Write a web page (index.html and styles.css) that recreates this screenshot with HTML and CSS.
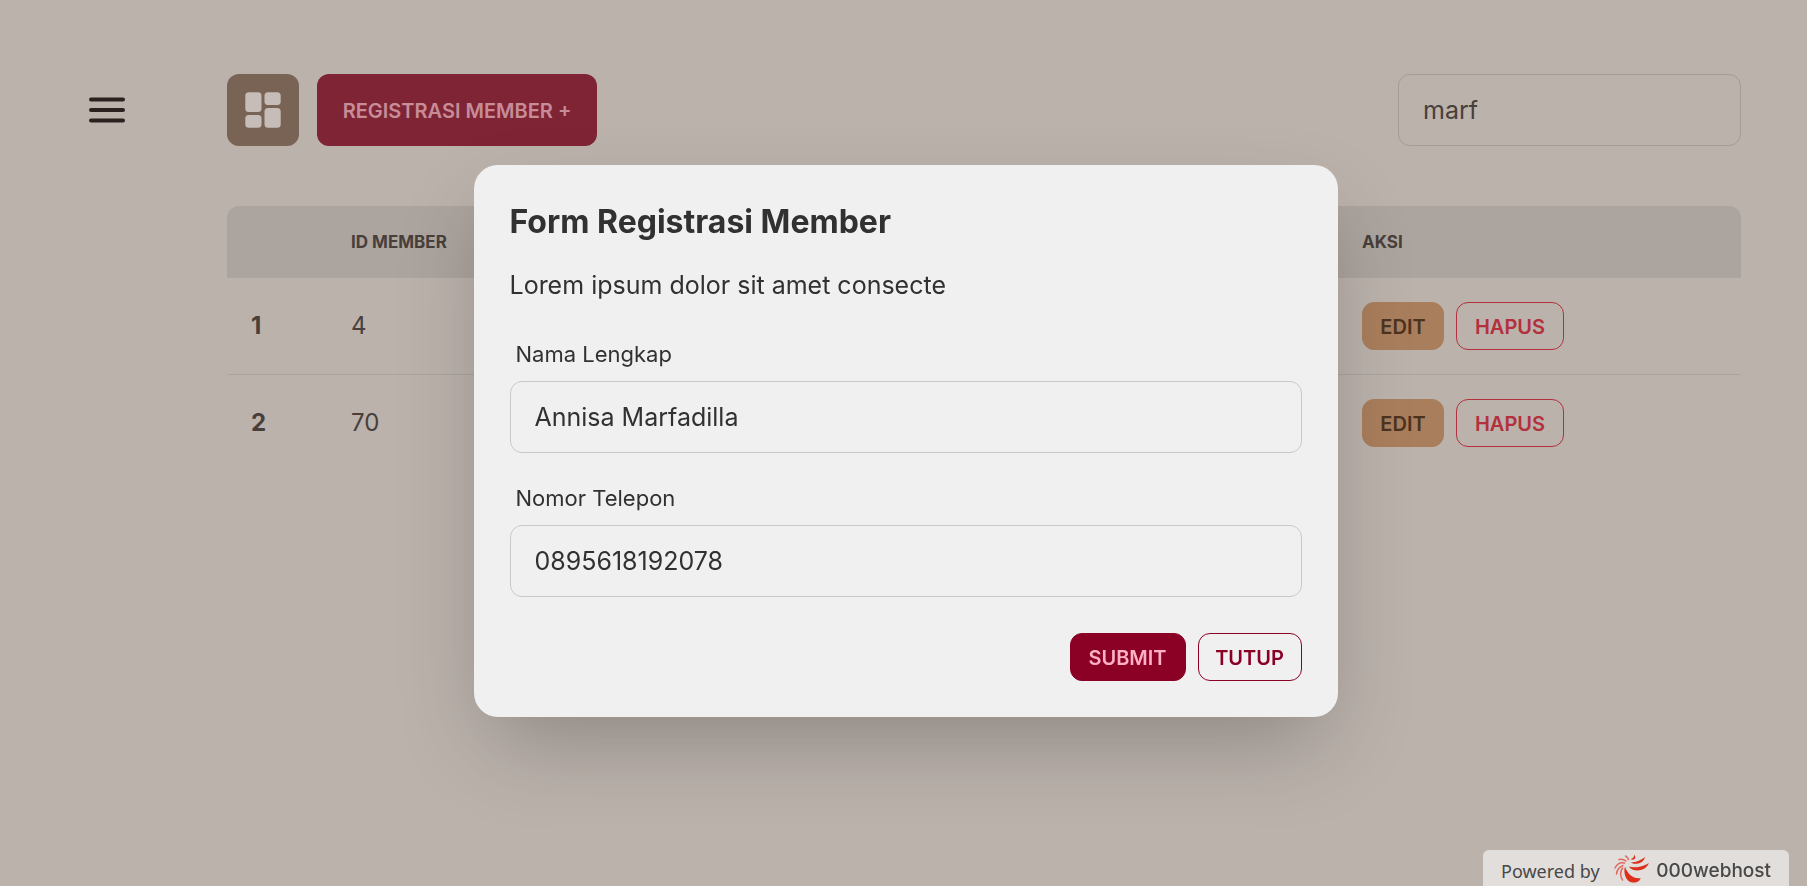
FILE: index.html
```html
<!DOCTYPE html>
<html lang="id">
<head>
<meta charset="utf-8">
<meta name="viewport" content="width=device-width, initial-scale=1">
<title>Registrasi Member</title>
<link rel="stylesheet" href="styles.css">
</head>
<body>
<div class="layout">
  <aside class="sidebar">
    <button class="menu-button" type="button" aria-label="Menu">
      <svg class="menu-icon" viewBox="0 0 36 26" aria-hidden="true"><path d="M2 2.5h32M2 13h32M2 23.5h32"/></svg>
    </button>
  </aside>
  <main class="content">
    <div class="toolbar">
      <button class="dash-button" type="button" aria-label="Dashboard">
        <svg class="dash-icon" viewBox="0 0 36 36" aria-hidden="true">
          <rect x="0.3" y="0.3" width="16.2" height="19.7" rx="3.5"/>
          <rect x="19.5" y="0.3" width="16.2" height="12.7" rx="3.5"/>
          <rect x="0.3" y="23" width="16.2" height="12.7" rx="3.5"/>
          <rect x="19.5" y="16" width="16.2" height="19.7" rx="3.5"/>
        </svg>
      </button>
      <button class="register-button" type="button">REGISTRASI MEMBER +</button>
      <input class="field search" type="text" value="marf" aria-label="Cari member">
    </div>
    <table class="members">
      <colgroup><col class="col-no"><col class="col-id"><col class="col-action"></colgroup>
      <thead>
        <tr><th></th><th>ID MEMBER</th><th>AKSI</th></tr>
      </thead>
      <tbody>
        <tr>
          <th scope="row">1</th><td>4</td>
          <td><div class="actions"><button class="btn btn-edit" type="button">EDIT</button><button class="btn btn-delete" type="button">HAPUS</button></div></td>
        </tr>
        <tr>
          <th scope="row">2</th><td>70</td>
          <td><div class="actions"><button class="btn btn-edit" type="button">EDIT</button><button class="btn btn-delete" type="button">HAPUS</button></div></td>
        </tr>
      </tbody>
    </table>
  </main>
</div>

<div class="overlay">
  <form class="modal" role="dialog" aria-labelledby="modal-title">
    <h3 class="modal-title" id="modal-title">Form Registrasi Member</h3>
    <p class="modal-text">Lorem ipsum dolor sit amet consecte</p>
    <div class="form-row">
      <label class="label" for="nama">Nama Lengkap</label>
      <input class="field modal-field" id="nama" type="text" value="Annisa Marfadilla">
    </div>
    <div class="form-row">
      <label class="label" for="telepon">Nomor Telepon</label>
      <input class="field modal-field" id="telepon" type="text" value="0895618192078">
    </div>
    <div class="modal-actions">
      <button class="btn btn-submit" type="button">SUBMIT</button>
      <button class="btn btn-close" type="button">TUTUP</button>
    </div>
  </form>
</div>

<a class="host-badge" href="#">
  <span class="host-powered">Powered by</span>
  <svg class="host-logo" viewBox="0 0 36 30" aria-hidden="true">
    <path d="M11 12.5C9 19 12 28 18.5 28.5C23 29 26 27 26.5 24C21 25.500 13.500 21 11 12.500Z"/>
    <path d="M15 12.500C18 18 31 18.500 35 9C31 12 21 14.500 15 12.500Z"/>
    <path d="M17 8.500C20 11.500 30 9.500 31 3C28 5.500 22 8.500 17 8.500Z"/>
    <path d="M16.500 5C20 7 23 4.500 20 0.500C20.500 3 19 4.500 16.500 5Z"/>
    <g class="host-rays">
      <path d="M14.500 5.500C13.500 3.500 13 2.500 11.500 2"/>
      <path d="M12 7C10 5.500 7.500 5 5 5.500"/>
      <path d="M10.500 9C6.500 8 3 10 1 14"/>
      <path d="M9 11.500C5 13 3 16 2.500 20"/>
      <path d="M8.500 14C6 18 6 22 8.500 26"/>
    </g>
  </svg>
  <span class="host-name">000webhost</span>
</a>
</body>
</html>
```

FILE: styles.css
```css
* { box-sizing: border-box; }

body {
  margin: 0;
  min-height: 100vh;
  background: #bbb2ac;
  color: #483f3b;
  font-family: Inter, "Open Sans", sans-serif;
  font-size: 25px;
  line-height: 36px;
  overflow: hidden;
}

button, input { font: inherit; color: inherit; margin: 0; }
button { cursor: pointer; }

.layout {
  display: grid;
  grid-template-columns: 227px 1fr;
  padding: 74px 66px 0 0;
}

.sidebar { padding-left: 89px; }

.menu-button {
  display: flex;
  align-items: center;
  height: 72px;
  padding: 0;
  border: 0;
  background: none;
}
.menu-icon {
  width: 36px;
  height: 26px;
  fill: none;
  stroke: #2b211e;
  stroke-width: 4;
  stroke-linecap: round;
}

.toolbar { display: flex; gap: 18px; margin-bottom: 60px; }

.dash-button {
  display: flex;
  align-items: center;
  justify-content: center;
  width: 72px;
  height: 72px;
  padding: 0;
  border: 0;
  border-radius: 12px;
  background: #796355;
}
.dash-icon { width: 36px; height: 36px; fill: #c6bdb8; }

.register-button {
  width: 280px;
  height: 72px;
  padding: 2px 0 0;
  border: 0;
  border-radius: 12px;
  background: #7f2434;
  color: #c78c97;
  font-size: 20px;
  font-weight: 600;
  white-space: nowrap;
}

.field {
  height: 72px;
  padding: 0 24px;
  border: 1px solid #a59c97;
  border-radius: 12px;
  background: transparent;
  outline: 0;
}
.search { width: 343px; margin-left: auto; }

.members {
  width: 100%;
  table-layout: fixed;
  border-collapse: separate;
  border-spacing: 0;
  font-size: 24px;
  text-align: left;
}
.col-no { width: 100px; }
.col-action { width: 403px; }
.members th, .members td { padding: 0 24px; }
.members thead th {
  height: 72px;
  background: #aca49e;
  font-size: 17px;
  font-weight: 700;
}
.members thead th:first-child { border-top-left-radius: 12px; }
.members thead th:last-child { border-top-right-radius: 12px; }
.members tbody th, .members tbody td { height: 96px; }
.members tbody tr:first-child > * { height: 97px; border-bottom: 1px solid #aca49e; }

.actions { display: flex; gap: 12px; }

.btn {
  height: 48px;
  padding: 2px 0 0;
  border: 1px solid;
  border-radius: 12px;
  font-size: 20px;
  font-weight: 600;
}
.btn-edit { width: 82px; border-color: #a97e5c; background: #a97e5c; color: #4b331f; }
.btn-delete { width: 108px; border-color: #b3303c; background: none; color: #b3303c; }

.overlay {
  position: fixed;
  inset: 0;
  display: flex;
  align-items: center;
  justify-content: center;
  padding: 0 0 4px 4px;
}

.modal {
  width: 864px;
  max-width: 92%;
  padding: 36px;
  border-radius: 24px;
  background: #f0f0f0;
  color: #313131;
  box-shadow: 0 37px 88px -16px rgba(0, 0, 0, 0.25);
}
.modal-title {
  margin: 0;
  font-size: 32px;
  line-height: 42px;
  font-weight: 700;
}
.modal-text { margin: 24px 0; }
.form-row { margin-bottom: 18px; }
.label {
  display: block;
  padding: 12px 6px;
  font-size: 22px;
  line-height: 30px;
}
.modal-field { display: block; width: 100%; border-color: #c9c9c9; }
.form-row + .form-row { margin-bottom: 36px; }
.modal-actions { display: flex; justify-content: flex-end; gap: 12px; }
.btn-submit { width: 116px; border-color: #8b0025; background: #8b0025; color: #ffb0c4; }
.btn-close { width: 104px; border-color: #8b0025; background: none; color: #8b0025; }

.host-badge {
  position: fixed;
  right: 18px;
  bottom: 0;
  display: flex;
  align-items: center;
  width: 306px;
  height: 36px;
  padding: 6px 18px 0;
  border-radius: 6px 6px 0 0;
  background: #e2dedb;
  color: #484848;
  text-decoration: none;
  white-space: nowrap;
}
.host-powered { font-family: "Noto Sans", sans-serif; font-size: 18px; }
.host-logo { flex: none; width: 36px; height: 30px; margin: 0 6px 4px auto; fill: #dc2f1c; }
.host-rays { fill: none; stroke: #e06a5e; stroke-width: 1.5; stroke-linecap: round; }
.host-name { font-size: 19px; font-weight: 500; }
```
